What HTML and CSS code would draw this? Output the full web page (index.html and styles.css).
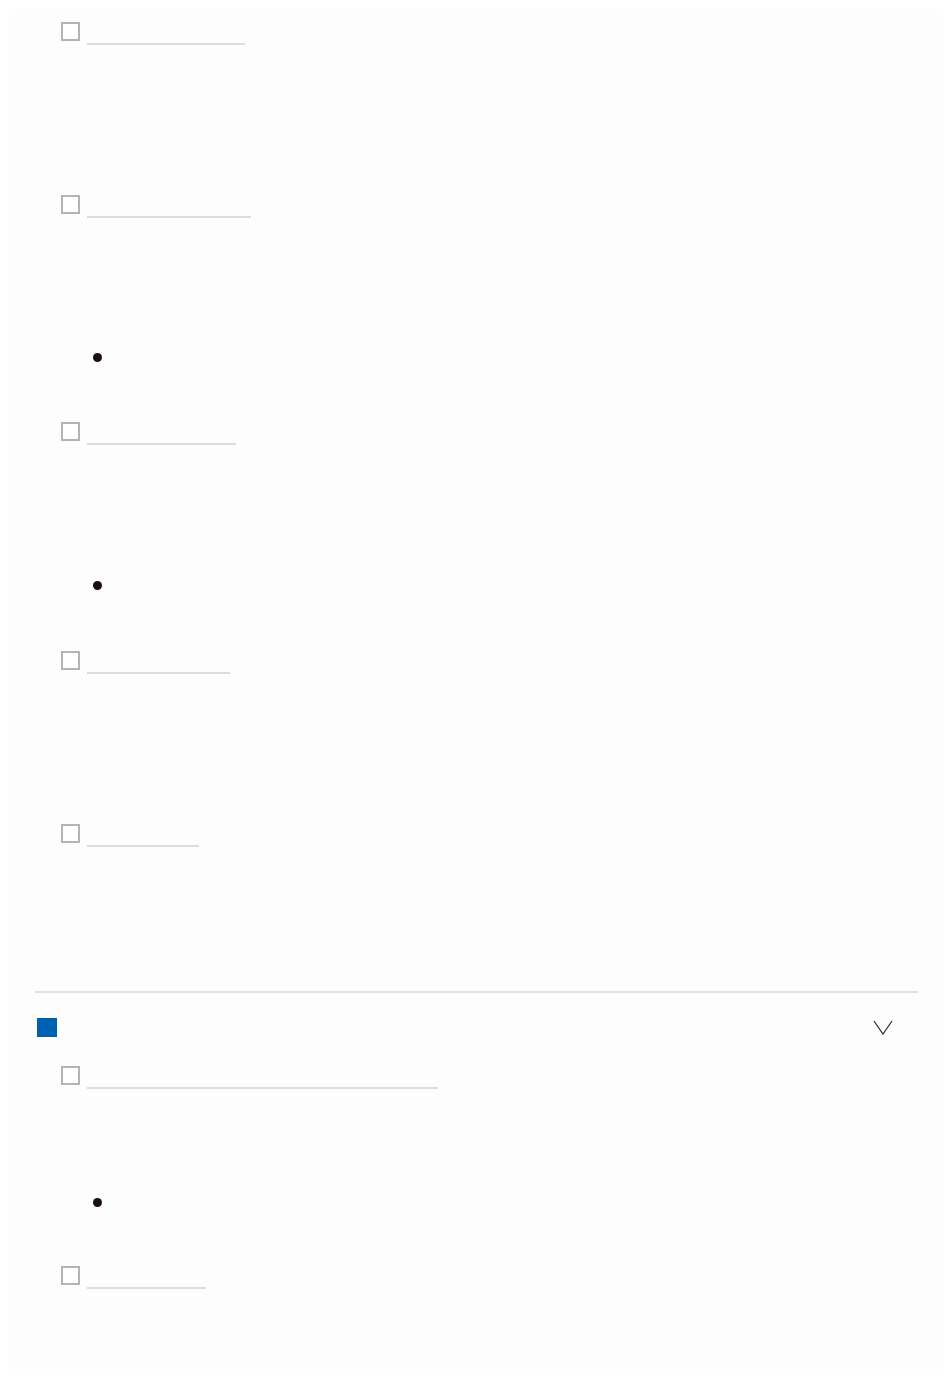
FILE: index.html
```html
<!DOCTYPE html>
<html lang="en">
<head>
  <meta charset="UTF-8" />
  <meta name="viewport" content="width=device-width, initial-scale=1.0"/>
  <title>Checklist</title>
  <link rel="stylesheet" href="styles.css">
</head>
<body>
  <div class="panel">
    <ul class="tasks">
      <li class="task task-short">
        <div class="task-head"><span class="box"></span><a class="label w158"></a></div>
      </li>
      <li class="task task-tall">
        <div class="task-head"><span class="box"></span><a class="label w164"></a></div>
        <div class="note note-a"><span class="dot"></span></div>
      </li>
      <li class="task task-taller">
        <div class="task-head"><span class="box"></span><a class="label w149"></a></div>
        <div class="note note-b"><span class="dot"></span></div>
      </li>
      <li class="task task-short">
        <div class="task-head"><span class="box"></span><a class="label w143"></a></div>
      </li>
      <li class="task task-last">
        <div class="task-head"><span class="box"></span><a class="label w112"></a></div>
      </li>
    </ul>

    <hr class="divider">

    <div class="section-head">
      <span class="mark"></span>
      <svg class="chevron" width="20" height="15" viewBox="0 0 20 15" aria-hidden="true">
        <polyline points="1,1 10,14 19,1" fill="none" stroke="#333" stroke-width="1.3"/>
      </svg>
    </div>

    <ul class="tasks">
      <li class="task task-mid">
        <div class="task-head"><span class="box"></span><a class="label w351"></a></div>
        <div class="note note-c"><span class="dot"></span></div>
      </li>
      <li class="task">
        <div class="task-head"><span class="box"></span><a class="label w119"></a></div>
      </li>
    </ul>
  </div>
</body>
</html>
```

FILE: styles.css
```css
body {
  margin: 0;
  background: #fff;
  font-family: 'Liberation Sans', Arial, sans-serif;
  color: #222;
}
.panel {
  margin: 9px;
  width: 934px;
  height: 1360px;
  background: #fdfdfd;
  padding-top: 13px;
  box-sizing: border-box;
  overflow: hidden;
}
.tasks {
  list-style: none;
  margin: 0;
  padding: 0 0 0 52px;
}
.task {
  display: flex;
  flex-direction: column;
}
.task-short { height: 173px; }
.task-tall { height: 227px; }
.task-taller { height: 229px; }
.task-last { height: 167px; }
.task-mid { height: 200px; }
.task-head {
  display: flex;
  align-items: flex-start;
  gap: 7px;
  height: 24px;
}
.box {
  width: 19px;
  height: 19px;
  box-sizing: border-box;
  border: 2px solid #b4b4b4;
  background: #fff;
}
.label {
  display: block;
  height: 21px;
  border-bottom: 2px solid #dcdcdc;
}
.w158 { width: 158px; }
.w164 { width: 164px; }
.w149 { width: 149px; }
.w143 { width: 143px; }
.w112 { width: 112px; }
.w351 { width: 351px; }
.w119 { width: 119px; }
.note {
  padding-left: 32px;
}
.note-a { margin-top: 134px; }
.note-b { margin-top: 135px; }
.note-c { margin-top: 108px; }
.dot {
  display: block;
  width: 9px;
  height: 9px;
  border-radius: 50%;
  background: #1a1010;
}
.divider {
  margin: 0 25px 0 26px;
  border: none;
  height: 2px;
  background: #e0e0e0;
}
.section-head {
  display: flex;
  align-items: center;
  justify-content: space-between;
  height: 19px;
  margin: 25px 50px 29px 28px;
}
.mark {
  width: 20px;
  height: 19px;
  background: #0060b2;
}
.chevron {
  display: block;
}
```
